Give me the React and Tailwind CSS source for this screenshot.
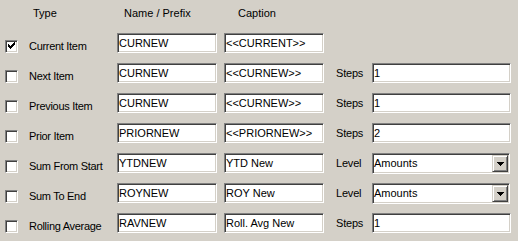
import React from "react"

const sunken =
  "border border-t-[#808080] border-l-[#808080] border-b-white border-r-white shadow-[inset_1px_1px_0_#404040,inset_-1px_-1px_0_#d4d0c8]"

const rows = [
  { label: "Current Item", name: "CURNEW", caption: "<<CURRENT>>", checked: true },
  { label: "Next Item", name: "CURNEW", caption: "<<CURNEW>>", extra: "Steps", value: "1" },
  { label: "Previous Item", name: "CURNEW", caption: "<<CURNEW>>", extra: "Steps", value: "1" },
  { label: "Prior Item", name: "PRIORNEW", caption: "<<PRIORNEW>>", extra: "Steps", value: "2" },
  { label: "Sum From Start", name: "YTDNEW", caption: "YTD New", extra: "Level", select: "Amounts" },
  { label: "Sum To End", name: "ROYNEW", caption: "ROY New", extra: "Level", select: "Amounts" },
  { label: "Rolling Average", name: "RAVNEW", caption: "Roll. Avg New", extra: "Steps", value: "1" },
]

function CheckBox({ checked }) {
  const cols = [2, 3, 4, 3, 2, 1, 0]
  return (
    <div className={`w-[13px] h-[13px] bg-white shrink-0 ${sunken}`}>
      {checked && (
        <svg width="11" height="11" viewBox="0 0 11 11" shapeRendering="crispEdges">
          {cols.map((y, i) => (
            <rect key={i} x={2 + i} y={1 + y} width="1" height="3" fill="#000" />
          ))}
        </svg>
      )}
    </div>
  )
}

function TextBox({ value, width }) {
  return (
    <input
      readOnly
      value={value}
      className={`h-[20px] ${width} bg-white px-[1px] text-[11px] text-black outline-none ${sunken}`}
    />
  )
}

function Combo({ value }) {
  return (
    <div className={`relative h-[21px] w-[138px] bg-white flex items-center pl-[1px] ${sunken}`}>
      <span className="text-[11px] leading-[13px] text-black">{value}</span>
      <div className="absolute right-[1px] top-[1px] w-[16px] h-[17px] bg-[#d4d0c8] border border-t-[#d4d0c8] border-l-[#d4d0c8] border-b-[#404040] border-r-[#404040] shadow-[inset_1px_1px_0_#fff,inset_-1px_-1px_0_#808080] flex items-center justify-center">
        <svg width="7" height="4" viewBox="0 0 7 4" shapeRendering="crispEdges">
          <path d="M0 0h7v1H0zM1 1h5v1H1zM2 2h3v1H2zM3 3h1v1H3z" fill="#000" />
        </svg>
      </div>
    </div>
  )
}

export default function App() {
  return (
    <div className="w-[518px] h-[241px] bg-[#d4d0c8] text-black text-[11px] leading-[13px] font-['Liberation_Sans',Arial,sans-serif] overflow-hidden">
      <div className="flex pl-[33px] pt-[7px] h-[33px]">
        <span className="w-[91px]">Type</span>
        <span className="w-[114px]">Name / Prefix</span>
        <span>Caption</span>
      </div>
      <div className="flex flex-col gap-[10px]">
        {rows.map((r) => (
          <div key={r.label} className="flex h-[20px]">
            <div className="flex items-center pl-[5px] mt-[7px] h-[13px]">
              <CheckBox checked={r.checked} />
              <span className="ml-[11px] w-[88px] tracking-[-0.3px]">{r.label}</span>
            </div>
            <TextBox value={r.name} width="w-[100px]" />
            <div className="ml-[7px]">
              <TextBox value={r.caption} width="w-[100px]" />
            </div>
            {r.extra && (
              <div className="flex items-start">
                <span className="ml-[12px] w-[36px] self-center tracking-[-0.2px]">{r.extra}</span>
                {r.select ? <Combo value={r.select} /> : <TextBox value={r.value} width="w-[139px]" />}
              </div>
            )}
          </div>
        ))}
      </div>
    </div>
  )
}
